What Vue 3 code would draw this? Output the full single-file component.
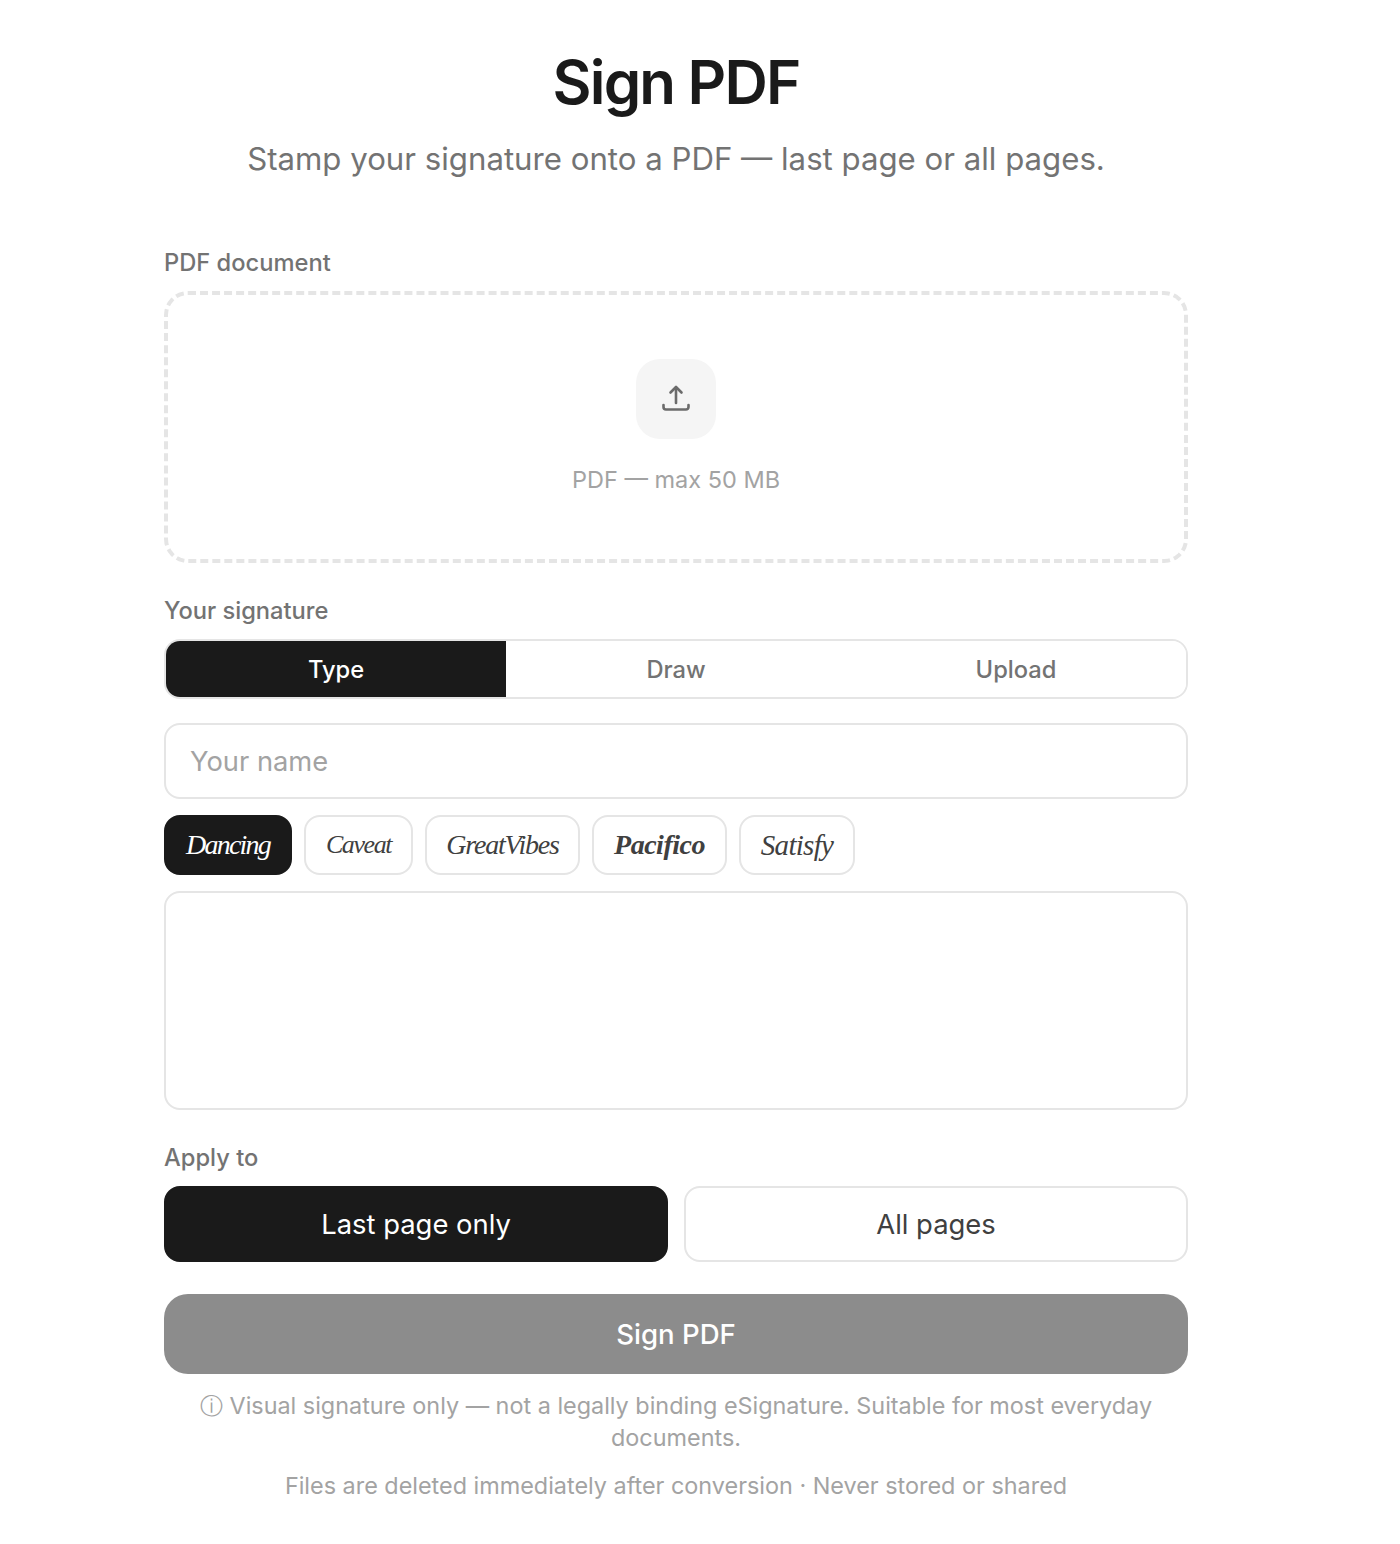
<script setup>
import { ref } from 'vue'

const tabs = ['Type', 'Draw', 'Upload']
const fonts = [
  { name: 'Dancing', cls: 'dancing' },
  { name: 'Caveat', cls: 'caveat' },
  { name: 'GreatVibes', cls: 'vibes' },
  { name: 'Pacifico', cls: 'pacifico' },
  { name: 'Satisfy', cls: 'satisfy' },
]
const activeTab = ref('Type')
const activeFont = ref('Dancing')
const applyTo = ref('last')
const name = ref('')
</script>

<template>
  <main class="page">
    <header class="head">
      <h1>Sign PDF</h1>
      <p>Stamp your signature onto a PDF — last page or all pages.</p>
    </header>

    <section class="form">
      <label class="label">PDF document</label>
      <div class="drop">
        <div class="drop-icon">
          <svg width="32" height="32" viewBox="0 0 32 32" fill="none" stroke="#6b6b6b" stroke-width="2.6" stroke-linecap="round" stroke-linejoin="round">
            <path d="M16 20V4.500" />
            <path d="M10.500 9.500L16 4l5.500 5.500" />
            <path d="M3.500 22v2a2.500 2.500 0 0 0 2.500 2.500h20a2.500 2.500 0 0 0 2.500-2.500v-2" />
          </svg>
        </div>
        <span class="drop-text">PDF — max 50 MB</span>
      </div>

      <label class="label sig-label">Your signature</label>
      <div class="tabs">
        <button
          v-for="t in tabs"
          :key="t"
          :class="['tab', { active: activeTab === t }]"
          @click="activeTab = t"
        >{{ t }}</button>
      </div>

      <input v-model="name" class="name" type="text" placeholder="Your name" />

      <div class="fonts">
        <button
          v-for="f in fonts"
          :key="f.name"
          :class="['font', f.cls, { active: activeFont === f.name }]"
          @click="activeFont = f.name"
        ><span>{{ f.name }}</span></button>
      </div>

      <div class="preview"></div>

      <label class="label apply-label">Apply to</label>
      <div class="apply">
        <button :class="['apply-btn', { active: applyTo === 'last' }]" @click="applyTo = 'last'">Last page only</button>
        <button :class="['apply-btn', { active: applyTo === 'all' }]" @click="applyTo = 'all'">All pages</button>
      </div>

      <button class="submit">Sign PDF</button>

      <p class="note">ⓘ Visual signature only — not a legally binding eSignature. Suitable for most everyday documents.</p>
      <p class="foot">Files are deleted immediately after conversion · Never stored or shared</p>
    </section>
  </main>
</template>

<style>
html, body {
  background: #fff;
}
</style>

<style scoped>
.page {
  width: 1352px;
  height: 1544px;
  padding-top: 48px;
  box-sizing: border-box;
  font-family: Inter, "Liberation Sans", sans-serif;
  color: #1a1a1a;
}

.head {
  text-align: center;
}

.head h1 {
  margin: 0;
  font-size: 60px;
  line-height: 68px;
  font-weight: 600;
  letter-spacing: -1.8px;
}

.head p {
  margin: 21px 0 0;
  font-size: 31.200px;
  line-height: 44px;
  color: #737373;
}

.form {
  width: 1024px;
  margin: 66px auto 0;
  display: flex;
  flex-direction: column;
}

.label {
  font-size: 23.700px;
  line-height: 32px;
  font-weight: 500;
  color: #737373;
}

.drop {
  height: 272px;
  margin-top: 12px;
  box-sizing: border-box;
  border: 4px dashed #e5e5e5;
  border-radius: 24px;
  display: flex;
  flex-direction: column;
  align-items: center;
  justify-content: center;
}

.drop-icon {
  width: 80px;
  height: 80px;
  border-radius: 24px;
  background: #f5f5f5;
  display: flex;
  align-items: center;
  justify-content: center;
}

.drop-text {
  margin-top: 25px;
  font-size: 23.500px;
  line-height: 32px;
  color: #a3a3a3;
}

.sig-label {
  margin-top: 32px;
}

.tabs {
  margin-top: 12px;
  height: 60px;
  box-sizing: border-box;
  border: 2px solid #e5e5e5;
  border-radius: 16px;
  overflow: hidden;
  display: flex;
}

.tab {
  flex: 1;
  border: 0;
  background: #fff;
  font: 500 23.700px Inter, sans-serif;
  color: #737373;
}

.tab.active {
  background: #1a1a1a;
  color: #fff;
}

.name {
  margin-top: 24px;
  height: 76px;
  box-sizing: border-box;
  border: 2px solid #e5e5e5;
  border-radius: 16px;
  padding: 0 24px;
  font: 400 27.300px Inter, sans-serif;
  color: #1a1a1a;
  outline: none;
}

.name::placeholder {
  color: #a3a3a3;
}

.fonts {
  margin-top: 16px;
  display: flex;
  gap: 12px;
}

.font {
  height: 60px;
  box-sizing: border-box;
  border: 2px solid #e5e5e5;
  border-radius: 16px;
  background: #fff;
  color: #404040;
  padding: 0;
  display: flex;
  align-items: center;
  justify-content: center;
  font-family: "Liberation Serif", serif;
  font-style: italic;
  white-space: nowrap;
}

.font.active {
  background: #1a1a1a;
  border-color: #1a1a1a;
  color: #fff;
}

.dancing { width: 128px; font-size: 28px; letter-spacing: -1.800px; }
.caveat { width: 109px; font-size: 26px; letter-spacing: -1.400px; }
.vibes { width: 155px; font-size: 28px; letter-spacing: -1.200px; }
.pacifico { width: 135px; font-size: 28px; letter-spacing: -0.500px; font-weight: 700; }
.satisfy { width: 116px; font-size: 29px; letter-spacing: -0.700px; }

.preview {
  margin-top: 16px;
  height: 219px;
  box-sizing: border-box;
  border: 2px solid #e5e5e5;
  border-radius: 16px;
}

.apply-label {
  margin-top: 32px;
}

.apply {
  margin-top: 12px;
  display: flex;
  gap: 16px;
}

.apply-btn {
  flex: 1;
  height: 76px;
  box-sizing: border-box;
  border: 2px solid #e5e5e5;
  border-radius: 16px;
  background: #fff;
  font: 400 27.400px Inter, sans-serif;
  color: #404040;
}

.apply-btn.active {
  background: #1a1a1a;
  border-color: #1a1a1a;
  color: #fff;
}

.submit {
  margin-top: 32px;
  height: 80px;
  border: 0;
  border-radius: 24px;
  background: #8c8c8c;
  color: #fff;
  font: 500 27.600px Inter, sans-serif;
}

.note {
  margin: 16px 0 0;
  text-align: center;
  font-size: 23.400px;
  line-height: 32px;
  color: #a3a3a3;
}

.foot {
  margin: 16px 0 0;
  text-align: center;
  font-size: 23.400px;
  line-height: 32px;
  color: #a3a3a3;
}
</style>
